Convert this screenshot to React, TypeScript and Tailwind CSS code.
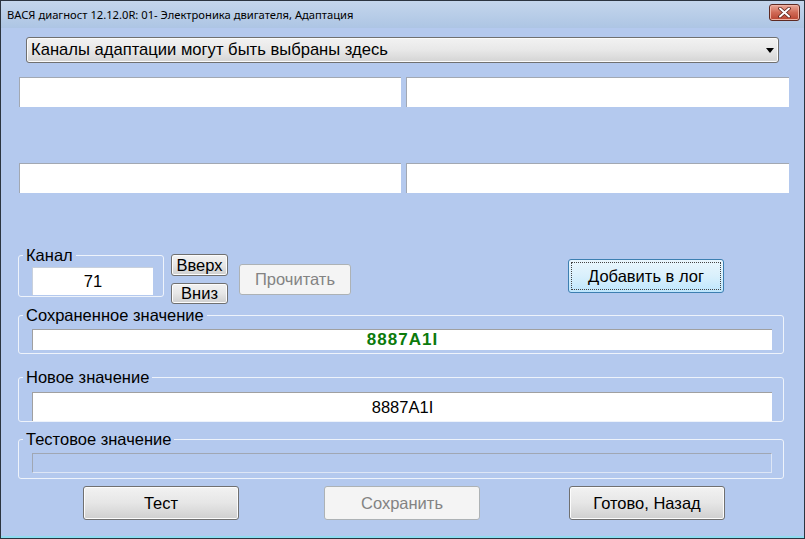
import React from 'react'

const arial = { fontFamily: '"Liberation Sans", Arial, sans-serif' }

function Btn({
  label,
  className = '',
  disabled = false,
  focused = false,
}: {
  label: string
  className?: string
  disabled?: boolean
  focused?: boolean
}) {
  if (disabled) {
    return (
      <div
        className={`flex items-center justify-center rounded-[3px] border border-[#adb2b5] bg-[#f4f4f4] text-[16.5px] text-[#838383] ${className}`}
      >
        {label}
      </div>
    )
  }
  if (focused) {
    return (
      <div
        className={`flex items-center justify-center rounded-[3px] border border-[#3c7fb1] bg-gradient-to-b from-[#eaf6fd] via-[#d9f0fc] to-[#bee6fd] p-[2px] text-[16.5px] text-black ${className}`}
      >
        <div className="flex h-full w-full items-center justify-center border border-dotted border-[#444]">
          {label}
        </div>
      </div>
    )
  }
  return (
    <div
      className={`flex items-center justify-center rounded-[3px] border border-[#707070] bg-gradient-to-b from-[#f2f2f2] via-[#e6e6e6] to-[#cfcfcf] text-[16.5px] text-black shadow-[inset_0_0_0_1px_#fcfcfc] ${className}`}
    >
      {label}
    </div>
  )
}

function Group({
  title,
  className = '',
  children,
}: {
  title: string
  className?: string
  children: React.ReactNode
}) {
  return (
    <fieldset className={`rounded-[3px] border border-[#eef3fb] ${className}`}>
      <legend className="ml-[4px] px-[3px] text-[16.5px] leading-[18px] text-black">{title}</legend>
      {children}
    </fieldset>
  )
}

export default function App() {
  return (
    <div
      className="flex h-[539px] w-[805px] flex-col overflow-hidden border border-[#2b3440] bg-[#b4c9ee]"
      style={arial}
    >
      {/* title bar */}
      <div className="flex h-[27px] shrink-0 items-center justify-between bg-gradient-to-b from-[#c4d6ec] to-[#adc5e4] pl-[6px] pr-[4px]">
        <span
          className="pt-[2px] text-[11.2px] text-black"
          style={{ fontFamily: '"Noto Sans", "Open Sans", sans-serif' }}
        >
          ВАСЯ диагност 12.12.0R: 01- Электроника двигателя, Адаптация
        </span>
        <div className="mb-[4px] flex h-[17px] w-[31px] items-center justify-center rounded-[3px] border border-[#5e2a22] bg-gradient-to-b from-[#e9a99a] via-[#d06a56] to-[#b8432f] shadow-[inset_0_0_0_1px_#efb3a4]">
          <svg width="13" height="11" viewBox="0 0 13 11">
            <path
              d="M2 1.5 L11 9.5 M11 1.5 L2 9.5"
              stroke="#5a2118"
              strokeWidth="3.6"
              strokeLinecap="round"
            />
            <path
              d="M2 1.5 L11 9.5 M11 1.5 L2 9.5"
              stroke="#ffffff"
              strokeWidth="2"
              strokeLinecap="round"
            />
          </svg>
        </div>
      </div>

      {/* body */}
      <div className="flex flex-1 flex-col">
        {/* combo */}
        <div className="ml-[25px] mt-[9px] flex h-[26px] w-[753px] items-center justify-between rounded-[3px] border border-[#707070] bg-gradient-to-b from-[#f2f2f2] via-[#e8e8e8] to-[#d4d4d4] pl-[4px] pr-[4px] text-[16.6px] text-black shadow-[inset_0_0_0_1px_#fbfbfb]">
          <span>Каналы адаптации могут быть выбраны здесь</span>
          <svg width="8" height="5" viewBox="0 0 8 5" className="mt-[1px]">
            <path d="M0 0 H8 L4 5 Z" fill="#000" />
          </svg>
        </div>

        {/* white boxes */}
        <div className="ml-[18px] mt-[14px] flex gap-[5px]">
          <div className="h-[30px] w-[382px] border-l border-t border-[#a2a8b2] bg-white" />
          <div className="h-[30px] w-[383px] border-l border-t border-[#a2a8b2] bg-white" />
        </div>
        <div className="ml-[18px] mt-[56px] flex gap-[5px]">
          <div className="h-[30px] w-[382px] border-l border-t border-[#a2a8b2] bg-white" />
          <div className="h-[30px] w-[383px] border-l border-t border-[#a2a8b2] bg-white" />
        </div>

        {/* channel row */}
        <div className="mt-[53px] flex h-[58px] items-start">
          <Group title="Канал" className="ml-[17px] w-[146px]">
            <div className="mb-[1px] ml-[13px] mt-[3px] flex h-[28px] w-[121px] items-center justify-center border-l border-t border-[#c8d0dc] bg-white text-[16.5px]">
              71
            </div>
          </Group>
          <div className="ml-[7px] flex flex-col">
            <Btn label="Вверх" className="mt-[8px] h-[22px] w-[57px]" />
            <Btn label="Вниз" className="mt-[7px] h-[21px] w-[57px]" />
          </div>
          <Btn label="Прочитать" disabled className="ml-[11px] mt-[18px] h-[31px] w-[112px]" />
          <Btn label="Добавить в лог" focused className="ml-[217px] mt-[13px] h-[34px] w-[156px]" />
        </div>

        {/* saved value */}
        <Group title="Сохраненное значение" className="ml-[17px] mt-[2px] w-[766px]">
          <div className="mb-[3px] ml-[13px] mt-[5px] flex h-[21px] w-[740px] items-center justify-center border-l border-t border-[#a0a0a0] bg-white text-[17px] font-bold tracking-[1px] text-[#0b7a0b]">
            8887A1I
          </div>
        </Group>

        {/* new value */}
        <Group title="Новое значение" className="ml-[17px] mt-[14px] w-[766px]">
          <div className="ml-[13px] mt-[6px] flex h-[29px] w-[740px] items-center justify-center border-l border-t border-[#a0a0a0] bg-white text-[16.5px] text-black">
            8887A1I
          </div>
        </Group>

        {/* test value */}
        <Group title="Тестовое значение" className="ml-[17px] mt-[8px] w-[766px]">
          <div className="mb-[5px] ml-[13px] mt-[5px] h-[20px] w-[740px] border border-[#a0a7b3] border-b-[#dde6f6] border-r-[#dde6f6] bg-[#b4c9ee]" />
        </Group>

        {/* bottom buttons */}
        <div className="ml-[82px] mt-[7px] flex">
          <Btn label="Тест" className="h-[34px] w-[156px]" />
          <Btn label="Сохранить" disabled className="ml-[85px] h-[34px] w-[156px]" />
          <Btn label="Готово, Назад" className="ml-[89px] h-[34px] w-[156px]" />
        </div>

        <div className="flex-1" />
        <div className="h-[2px] bg-[#8fdcf0]" />
      </div>
    </div>
  )
}
